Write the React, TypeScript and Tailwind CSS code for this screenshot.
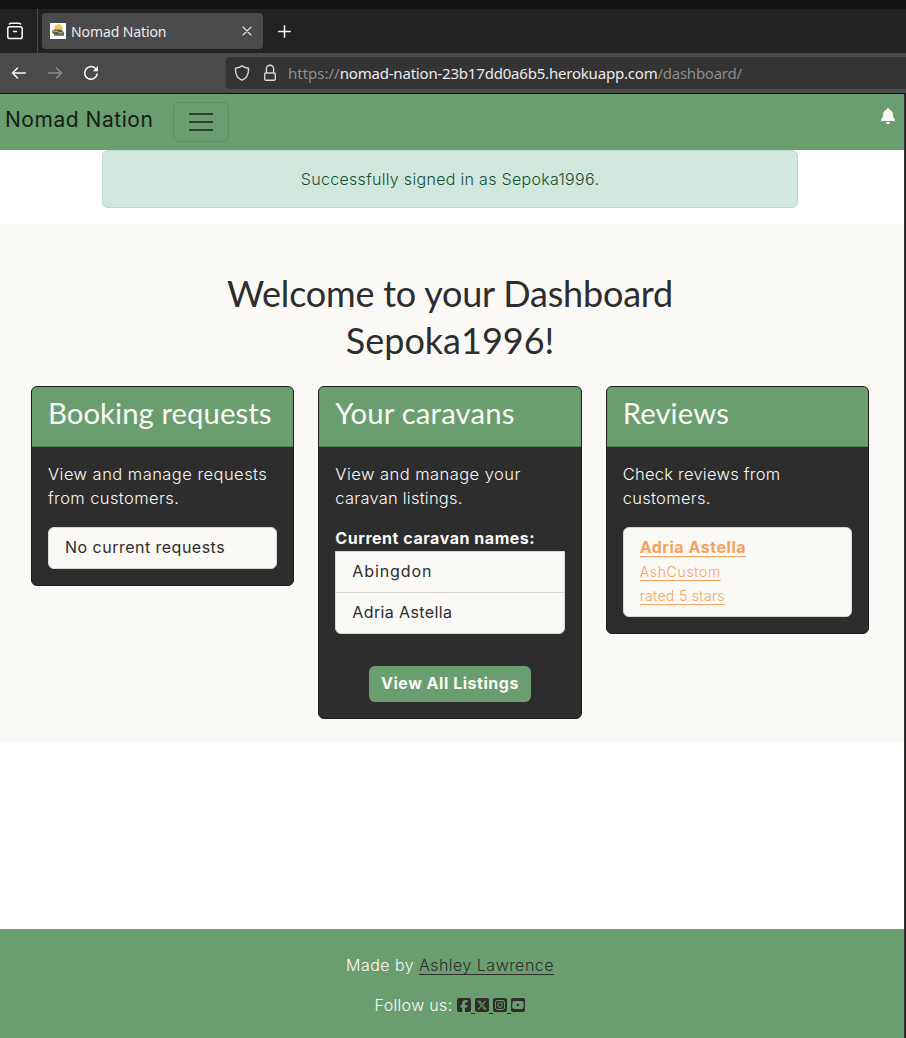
import type { ReactNode } from "react";
import {
  FaBell,
  FaSquareFacebook,
  FaSquareInstagram,
  FaSquareXTwitter,
  FaSquareYoutube,
} from "react-icons/fa6";

function Favicon() {
  return (
    <svg width="16" height="16" viewBox="0 0 16 16" className="shrink-0">
      <rect width="16" height="16" fill="#fff" />
      <circle cx="8.500" cy="5.500" r="4.200" fill="#f5c451" />
      <path d="M2 8l2.500-1.500 7 .3L14 9.500v2H5L2.500 10z" fill="#5f584c" />
      <path d="M3 8.300h5M8 9.800h5" stroke="#c9b994" strokeWidth="1" />
      <path d="M4 12h10" stroke="#3e3b36" strokeWidth="1.200" />
    </svg>
  );
}

function TabStrip() {
  return (
    <div className="flex h-11 bg-[#222222]">
      <div className="flex w-[38px] items-center border-r border-[#4a4a4a] pl-1.5">
        <svg width="18" height="18" viewBox="0 0 18 18" fill="none" stroke="#fbfbfe" strokeWidth="1.500" strokeLinecap="round">
          <path d="M3.500 1.900C4 1.400 4.500 1.300 5 1.300h8c.5 0 1 .1 1.500.6" />
          <rect x="1.800" y="4.800" width="14.400" height="11.700" rx="1.800" />
          <path d="M7.500 9.500h3" />
        </svg>
      </div>
      <div className="mt-1 ml-1 flex h-9 w-[221px] items-center rounded bg-[#4a4a4a] pr-[11px] pl-2">
        <Favicon />
        <span className="ml-[5px] pt-px font-['Noto_Sans',sans-serif] text-[14px] tracking-[-0.1px] text-[#ececef]">
          Nomad Nation
        </span>
        <svg width="10" height="10" viewBox="0 0 10 10" className="ml-auto" stroke="#e4e4e6" strokeWidth="1.100" strokeLinecap="round">
          <path d="M1 1l8 8M9 1L1 9" />
        </svg>
      </div>
      <svg width="13" height="13" viewBox="0 0 13 13" className="mt-4 ml-[15px]" stroke="#fbfbfe" strokeWidth="1.500" strokeLinecap="round">
        <path d="M6.500 .75v11.500M.75 6.500h11.500" />
      </svg>
    </div>
  );
}

function Toolbar() {
  return (
    <div className="flex h-[41px] items-center border-b border-[#141414] bg-[#4a4a4a]">
      <svg width="16" height="14" viewBox="0 0 16 14" className="ml-[11px]" fill="none" stroke="#fbfbfe" strokeWidth="1.500" strokeLinecap="round" strokeLinejoin="round">
        <path d="M14.300 7H1.500M6.500 2L1.500 7l5 5" />
      </svg>
      <svg width="16" height="14" viewBox="0 0 16 14" className="ml-5" fill="none" stroke="#8d8d8e" strokeWidth="1.500" strokeLinecap="round" strokeLinejoin="round">
        <path d="M1.700 7h12.800M9.500 2l5 5-5 5" />
      </svg>
      <svg width="16" height="16" viewBox="0 0 16 16" className="ml-5" fill="none" stroke="#fbfbfe" strokeWidth="1.500" strokeLinecap="round">
        <path d="M12.300 3.300A6.300 6.300 0 1 0 14.200 9" />
        <path d="M15 1v5.200H9.800z" fill="#fbfbfe" stroke="none" />
      </svg>
      <div className="ml-[127px] flex h-8 flex-1 items-center rounded-l bg-[#343434] pl-2 font-['Noto_Sans',sans-serif] text-[15px] text-[#8e8e8f]">
        <svg width="16" height="16" viewBox="0 0 16 16" fill="none" stroke="#d8d8da" strokeWidth="1.400" strokeLinejoin="round">
          <path d="M8 .8c1.600 1.400 4 2.200 6.500 2.500C14.800 9 12.500 13.300 8 15.200 3.500 13.300 1.200 9 1.500 3.300 4 3 6.400 2.200 8 .8z" />
        </svg>
        <svg width="14" height="18" viewBox="0 0 14 18" className="ml-[13px]" fill="none" stroke="#d8d8da" strokeWidth="1.400">
          <path d="M3.400 9V4.800a3.600 3.600 0 0 1 7.200 0V9" />
          <rect x="1.700" y="9" width="10.600" height="7.300" rx="1.300" />
        </svg>
        <span className="ml-[11px] whitespace-nowrap">
          <span>https://</span>
          <span className="tracking-[-0.2px] text-[#ececef]">nomad-nation-23b17dd0a6b5.herokuapp.com</span>
          <span className="tracking-[-0.25px]">/dashboard/</span>
        </span>
      </div>
    </div>
  );
}

function Navbar() {
  return (
    <nav className="flex h-14 shrink-0 bg-[#6a9e6e]">
      <span className="mt-[11px] ml-[5px] w-[150px] text-[21px] leading-[30px] tracking-[0.54px] whitespace-nowrap text-[#151c16]">
        Nomad Nation
      </span>
      <div className="mt-2 ml-[18px] flex h-10 w-14 items-center justify-center rounded-md border border-[#5f8e63]">
        <svg width="24" height="20" viewBox="0 0 24 20" stroke="#2b402c" strokeWidth="2">
          <path d="M0 2h24M0 10h24M0 18h24" />
        </svg>
      </div>
      <FaBell className="mt-3.5 mr-2 ml-auto size-4 text-[#faf9f6]" />
    </nav>
  );
}

function Card({ title, titleClass, children }: { title: string; titleClass: string; children: ReactNode }) {
  return (
    <div className="overflow-hidden rounded-md border border-[#1d1c20] bg-[#2d2d2d]">
      <div className="h-[60px] border-b border-[#54805a] bg-[#6a9e6e] px-4 pt-2">
        <h2 className={`font-['Lato',sans-serif] text-[29.3px] leading-9 whitespace-nowrap text-[#faf9f6] ${titleClass}`}>
          {title}
        </h2>
      </div>
      <div className="px-4 pt-[15px] pb-4">{children}</div>
    </div>
  );
}

export default function App() {
  return (
    <div className="flex h-[1038px] w-[906px] flex-col overflow-hidden bg-white font-['Inter',sans-serif] text-base leading-6 text-[#2d2d2d]">
      <div className="h-[9px] shrink-0 bg-[#141414]" />
      <TabStrip />
      <Toolbar />
      <div className="flex flex-1">
        <div className="flex w-[904px] flex-col">
          <Navbar />
          <div className="mr-[106px] ml-[102px] flex h-[58px] items-center justify-center rounded-md border border-[#badbcc] bg-[#d1e7dd] tracking-[0.31px] text-[#0f5132]">
            <span className="font-light">Successfully signed in as Sepoka1996.</span>
          </div>

          <main className="mt-4 h-[519px] bg-[#faf9f6] pt-[46px] pr-[35px] pl-[31px]">
            <h1 className="text-center font-['Lato',sans-serif] text-[36px] leading-[47px]">
              <span className="block tracking-[-0.2px]">Welcome to your Dashboard</span>
              <span className="block">Sepoka1996!</span>
            </h1>
            <div className="mt-[22px] grid grid-cols-3 items-start gap-6">
              <Card title="Booking requests" titleClass="tracking-[0.06px]">
                <p className="font-light text-[#faf9f6]">
                  <span className="block text-[16.5px] tracking-[0.46px]">View and manage requests</span>
                  <span className="block text-[16.5px] tracking-[0.4px]">from customers.</span>
                </p>
                <div className="mt-[17px] h-[42px] rounded-md border border-[#d9d8d6] bg-[#faf9f6] px-4 py-[7px] tracking-[0.48px]">
                  No current requests
                </div>
              </Card>

              <Card title="Your caravans" titleClass="tracking-[0.16px]">
                <p className="font-light text-[#faf9f6]">
                  <span className="block text-[16.5px] tracking-[0.46px]">View and manage your</span>
                  <span className="block text-[16.5px] tracking-[0.23px]">caravan listings.</span>
                </p>
                <p className="mt-4 font-bold tracking-[0.54px] text-[#faf9f6]">Current caravan names:</p>
                <ul className="mt-px rounded-b-md border border-[#d9d8d6] bg-[#faf9f6]">
                  <li className="h-[41px] border-b border-[#d9d8d6] px-4 py-[7px] tracking-[0.89px]">Abingdon</li>
                  <li className="h-10 px-4 py-[7px] tracking-[0.38px]">Adria Astella</li>
                </ul>
                <button className="mx-auto mt-8 block h-9 w-[162px] rounded-md bg-[#6a9e6e] pb-0.5 text-center font-bold tracking-[0.53px] whitespace-nowrap text-[#faf9f6]">
                  View All Listings
                </button>
              </Card>

              <Card title="Reviews" titleClass="tracking-[0.1px]">
                <p className="font-light text-[#faf9f6]">
                  <span className="block text-[16.5px] tracking-[0.25px]">Check reviews from</span>
                  <span className="block text-[16.5px] tracking-[0.3px]">customers.</span>
                </p>
                <a
                  href="#"
                  className="mt-[17px] flex h-[90px] flex-col items-start rounded-md border border-[#d9d8d6] bg-[#faf9f6] px-4 pt-[7px] text-[#f4a261]"
                >
                  <span className="font-bold tracking-[0.52px] underline decoration-1 underline-offset-3">Adria Astella</span>
                  <span className="mt-px text-sm leading-6 font-light tracking-[0.68px] underline decoration-1 underline-offset-3">AshCustom</span>
                  <span className="text-sm leading-6 font-light tracking-[0.33px] underline decoration-1 underline-offset-3">rated 5 stars</span>
                </a>
              </Card>
            </div>
          </main>

          <footer className="mt-auto h-[109px] bg-[#6a9e6e] pt-6 pr-1 text-center font-light text-[#faf9f6]">
            <p>
              <span className="tracking-[0.45px]">Made by </span>
              <a href="#" className="tracking-[0.48px] text-[#2d2d2d] underline decoration-1 underline-offset-3">
                Ashley Lawrence
              </a>
            </p>
            <p className="mt-4 flex items-center justify-center">
              <span className="mr-1 tracking-[0.33px]">Follow us:</span>
              <a href="#" className="flex items-center text-[#2d2d2d]">
                <FaSquareFacebook className="h-4 w-3.5" />
                <span className="h-[17px] w-[4.3px] border-b border-[#2d2d2d]" />
                <FaSquareXTwitter className="h-4 w-3.5" />
                <span className="h-[17px] w-[4.3px] border-b border-[#2d2d2d]" />
                <FaSquareInstagram className="h-4 w-3.5" />
                <span className="h-[17px] w-[4.3px] border-b border-[#2d2d2d]" />
                <FaSquareYoutube className="h-4 w-3.5" />
              </a>
            </p>
          </footer>
        </div>
        <div className="w-0.5 border-l border-[#3a3a3a] bg-[#15151a]" />
      </div>
    </div>
  );
}
